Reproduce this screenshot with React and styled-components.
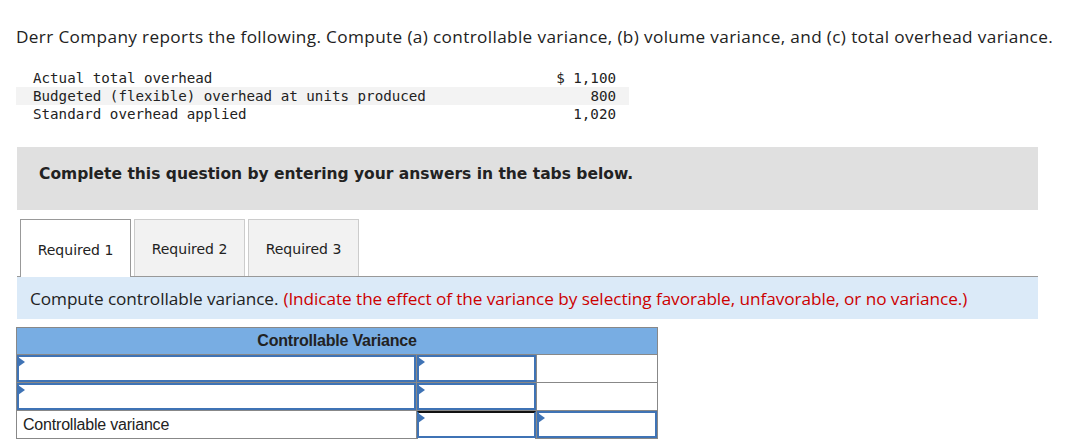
import React from "react";
import styled, { createGlobalStyle } from "styled-components";

const GlobalStyle = createGlobalStyle`
  body {
    margin: 0;
    background: #fff;
    color: #222;
  }
`;

const Page = styled.div`
  width: 1076px;
  height: 440px;
  overflow: hidden;
  padding: 26px 0 0 16px;
  box-sizing: border-box;
`;

const Question = styled.p`
  margin: 0;
  font-family: "Open Sans", Lato, sans-serif;
  font-size: 17.2px;
  letter-spacing: 0.36px;
  color: #222;
  line-height: 22px;
  white-space: nowrap;
`;

const DataTable = styled.div`
  margin-top: 21px;
  width: 613px;
  display: flex;
  flex-direction: column;
  font-family: "DejaVu Sans Mono", "Liberation Mono", monospace;
  font-size: 14.2px;
  color: #222;
`;

const DataRow = styled.div`
  display: flex;
  justify-content: space-between;
  height: 18px;
  line-height: 18px;
  padding: 0 13px 0 17px;
  background: ${({ shaded }) => (shaded ? "#f3f3f3" : "transparent")};
`;

const Banner = styled.div`
  margin-top: 24px;
  width: 1021px;
  height: 63px;
  margin-left: 1px;
  background: #e0e0e0;
  padding: 17px 0 0 22px;
  box-sizing: border-box;
  font-family: "DejaVu Sans", Verdana, sans-serif;
  font-weight: bold;
  font-size: 15.5px;
  line-height: 20px;
  color: #222;
`;

const Tabs = styled.div`
  margin-top: 9px;
  margin-left: 1px;
  width: 1021px;
  display: flex;
  gap: 3px;
  padding-left: 3px;
  box-sizing: border-box;
  border-bottom: 1px solid #999;
`;

const Tab = styled.div`
  width: 111px;
  box-sizing: border-box;
  display: flex;
  align-items: center;
  justify-content: center;
  padding-top: 2px;
  font-family: "DejaVu Sans", Verdana, sans-serif;
  font-size: 14px;
  color: #222;
  background: ${({ active }) => (active ? "#fff" : "#f2f2f2")};
  border: 1px solid ${({ active }) => (active ? "#999" : "#ccc")};
  border-bottom: none;
  margin-bottom: ${({ active }) => (active ? "-1px" : "0")};
  height: ${({ active }) => (active ? "58px" : "57px")};
`;

const Instruction = styled.div`
  margin-left: 1px;
  width: 1021px;
  height: 42px;
  background: #dbeaf8;
  display: flex;
  align-items: center;
  padding-left: 13px;
  box-sizing: border-box;
  font-family: "Open Sans", Lato, sans-serif;
  font-size: 17.2px;
  letter-spacing: -0.06px;
  color: #222;
  white-space: nowrap;
`;

const Red = styled.span`
  color: #c00;
  margin-left: 5px;
`;

const Grid = styled.div`
  margin-top: 8px;
  width: 642px;
  box-sizing: border-box;
  border: 1px solid #888;
  font-family: "Liberation Sans", Arial, sans-serif;
`;

const Head = styled.div`
  height: 25px;
  background: #78ade3;
  border-bottom: 1px solid #888;
  display: flex;
  align-items: center;
  justify-content: center;
  font-size: 16px;
  font-weight: bold;
  color: #222;
  letter-spacing: -0.2px;
  padding-bottom: 1px;
  box-sizing: content-box;
`;

const Row = styled.div`
  display: grid;
  grid-template-columns: 400px 120px 120px;
  height: 27px;
  border-bottom: ${({ last }) => (last ? "none" : "1px solid #888")};
`;

const Cell = styled.div`
  border-right: ${({ last }) => (last ? "none" : "1px solid #888")};
  display: flex;
  align-items: center;
  font-size: 16px;
  color: #222;
  letter-spacing: -0.2px;
  padding-left: ${({ label }) => (label ? "6px" : "0")};
`;

const Input = styled.div`
  position: relative;
  width: 100%;
  height: 100%;
  box-sizing: border-box;
  border: 2px solid #3f73b5;
  border-top-color: ${({ total }) => (total ? "#111" : "#3f73b5")};
  box-shadow: ${({ total }) => (total ? "0 3px 0 -1px #fff, 0 4px 0 -1px #111" : "none")};

  &::before {
    content: "";
    position: absolute;
    top: 0;
    left: -1px;
    border-top: 5px solid transparent;
    border-bottom: 5px solid transparent;
    border-left: 7px solid #3f73b5;
  }
`;

const rows = [
  ["Actual total overhead", "$ 1,100"],
  ["Budgeted (flexible) overhead at units produced", "800"],
  ["Standard overhead applied", "1,020"],
];

export default function App() {
  return (
    <>
      <GlobalStyle />
      <Page>
        <Question>
          Derr Company reports the following. Compute (a) controllable variance, (b) volume
          variance, and (c) total overhead variance.
        </Question>
        <DataTable>
          {rows.map(([label, value], i) => (
            <DataRow key={label} shaded={i === 1}>
              <span>{label}</span>
              <span>{value}</span>
            </DataRow>
          ))}
        </DataTable>
        <Banner>Complete this question by entering your answers in the tabs below.</Banner>
        <Tabs>
          <Tab active>Required 1</Tab>
          <Tab>Required 2</Tab>
          <Tab>Required 3</Tab>
        </Tabs>
        <Instruction>
          Compute controllable variance.
          <Red>
            (Indicate the effect of the variance by selecting favorable, unfavorable, or no
            variance.)
          </Red>
        </Instruction>
        <Grid>
          <Head>Controllable Variance</Head>
          <Row>
            <Cell><Input /></Cell>
            <Cell><Input /></Cell>
            <Cell last />
          </Row>
          <Row>
            <Cell><Input /></Cell>
            <Cell><Input /></Cell>
            <Cell last />
          </Row>
          <Row last>
            <Cell label>Controllable variance</Cell>
            <Cell><Input total /></Cell>
            <Cell last><Input /></Cell>
          </Row>
        </Grid>
      </Page>
    </>
  );
}
